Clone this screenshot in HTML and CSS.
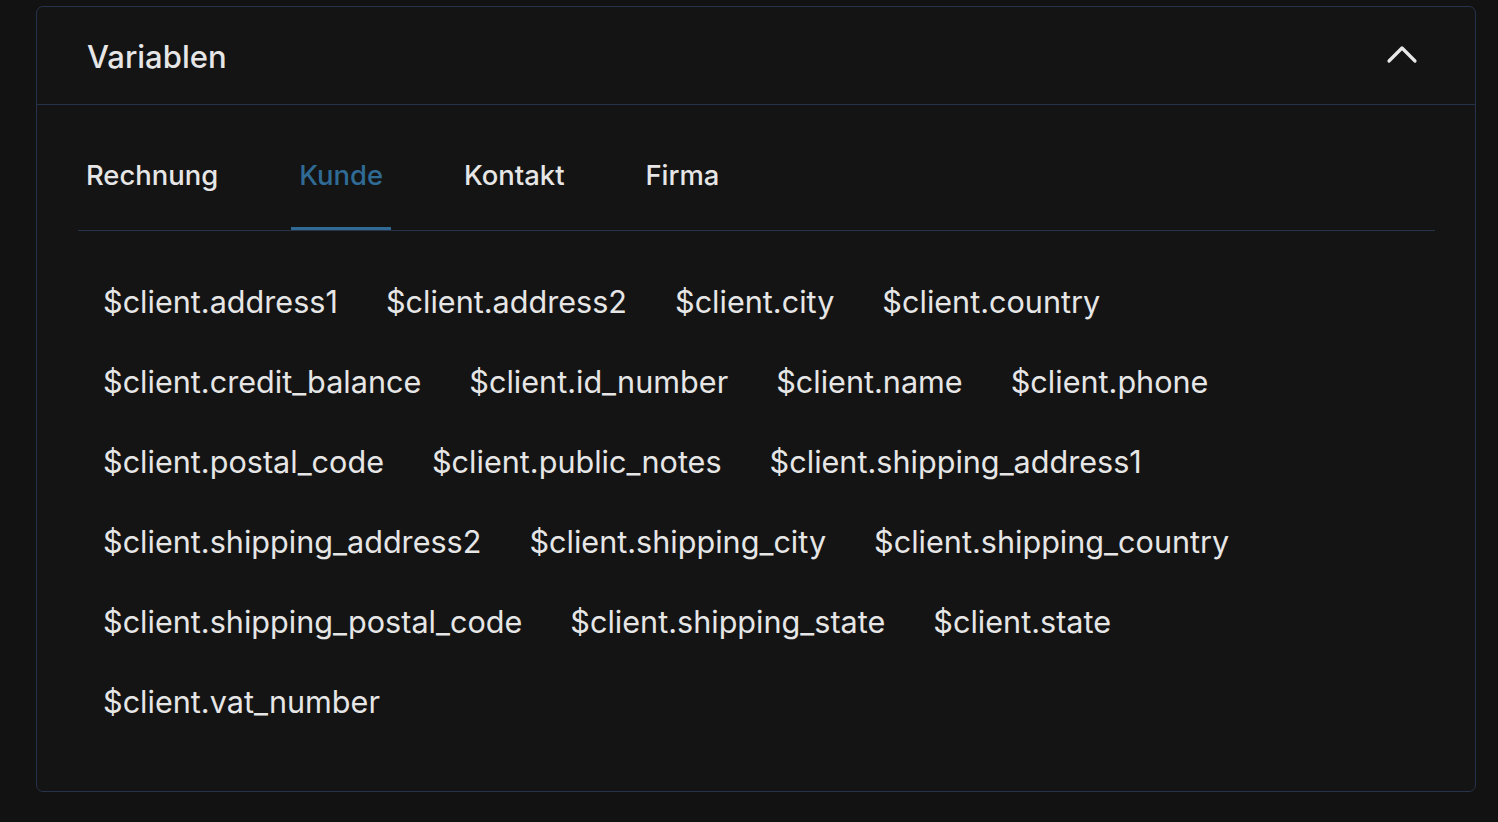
FILE: index.html
```html
<!DOCTYPE html>
<html lang="de">
<head>
    <meta charset="UTF-8">
    <meta name="viewport" content="width=device-width, initial-scale=1.0">
    <title>Variablen</title>
    <link rel="stylesheet" href="styles.css">
</head>
<body>
    <div class="card">
        <div class="card-header">
            <h2>Variablen</h2>
            <svg class="chevron" width="32" height="20" viewBox="0 0 32 20">
                <polyline points="3,16 16,3 29,16" fill="none" stroke="#e8e8e8" stroke-width="3.2" stroke-linecap="round" stroke-linejoin="round"/>
            </svg>
        </div>
        <div class="card-body">
            <div class="tabs">
                <div class="tab">Rechnung</div>
                <div class="tab active">Kunde</div>
                <div class="tab">Kontakt</div>
                <div class="tab">Firma</div>
            </div>
            <div class="vars">
                <span>$client.address1</span>
                <span>$client.address2</span>
                <span>$client.city</span>
                <span>$client.country</span>
                <span>$client.credit_balance</span>
                <span>$client.id_number</span>
                <span>$client.name</span>
                <span>$client.phone</span>
                <span>$client.postal_code</span>
                <span>$client.public_notes</span>
                <span>$client.shipping_address1</span>
                <span>$client.shipping_address2</span>
                <span>$client.shipping_city</span>
                <span>$client.shipping_country</span>
                <span>$client.shipping_postal_code</span>
                <span>$client.shipping_state</span>
                <span>$client.state</span>
                <span>$client.vat_number</span>
            </div>
        </div>
    </div>
</body>
</html>
```

FILE: styles.css
```css
body {
    margin: 0;
    padding: 6px 0 0 36px;
    background-color: #121212;
    font-family: Inter, "Noto Sans", sans-serif;
    color: #e6e6e6;
}
.card {
    width: 1440px;
    height: 786px;
    box-sizing: border-box;
    border: 1px solid #27334a;
    border-radius: 7px;
    background-color: #141414;
}
.card-header {
    height: 97px;
    padding: 0 57px 0 50px;
    display: flex;
    align-items: center;
    justify-content: space-between;
    border-bottom: 1px solid #27334a;
}
.card-header h2 {
    margin: 2px 0 0 0;
    font-size: 31px;
    font-weight: 500;
}
.chevron {
    margin-top: -2px;
}
.card-body {
    padding: 0 40px 0 41px;
}
.tabs {
    display: flex;
    gap: 65px;
    padding-top: 53px;
    border-bottom: 1px solid #27334a;
}
.tab {
    padding: 0 8px 35px 8px;
    font-size: 27.4px;
    line-height: 34px;
    font-weight: 500;
    border-bottom: 3px solid transparent;
}
.tab.active {
    color: #2f6b95;
    border-bottom-color: #2f6b95;
}
.vars {
    display: flex;
    flex-wrap: wrap;
    column-gap: 48px;
    padding: 31px 24px 0 25px;
    font-size: 30.6px;
    line-height: 80px;
}
```
